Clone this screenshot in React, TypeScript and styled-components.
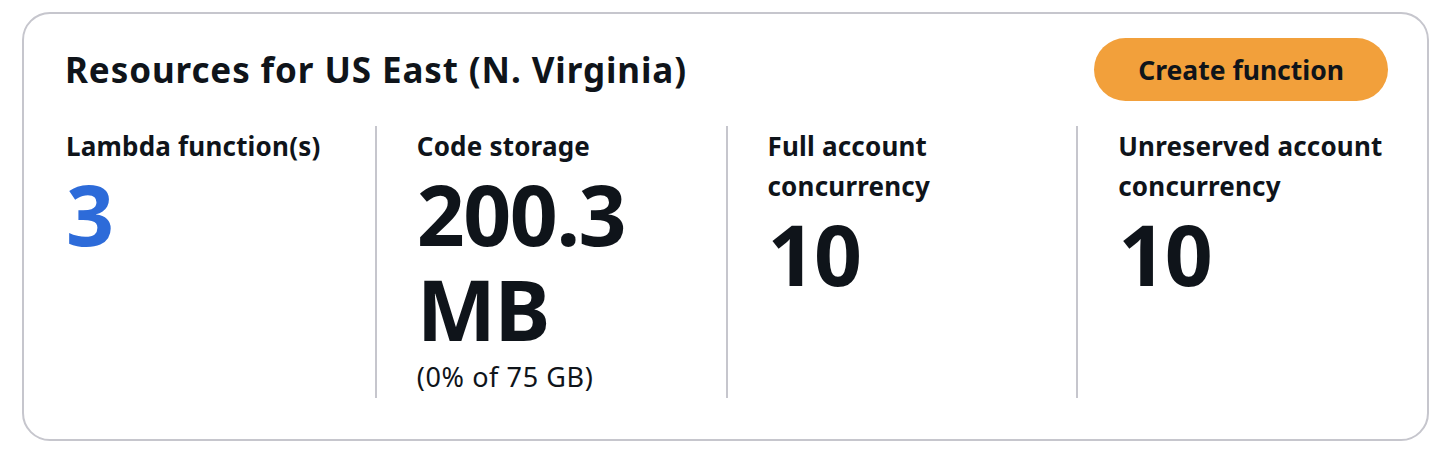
import { createGlobalStyle, styled } from 'styled-components';

const GlobalStyle = createGlobalStyle`
  body {
    margin: 0;
    background: #ffffff;
    font-family: "Noto Sans", "Open Sans", Arial, sans-serif;
    color: #0f141a;
  }
`;

const Page = styled.div`
  padding: 12px 27px 0 22px;
`;

// 리소스 카드
const Card = styled.section`
  border: 2px solid #c6c6cd;
  border-radius: 28px;
  padding: 24px 0 41px;
  background: #ffffff;
`;

const Header = styled.div`
  display: flex;
  align-items: center;
  justify-content: space-between;
  padding: 0 39px 0 41px;
`;

const Title = styled.h2`
  margin: 0;
  font-size: 35px;
  font-weight: 700;
  letter-spacing: 0.9px;
  color: #0f141a;
`;

const PrimaryButton = styled.button`
  height: 63px;
  padding: 0 44px;
  border: none;
  border-radius: 32px;
  background: #f2a03b;
  color: #0f141a;
  font-family: inherit;
  font-size: 26.5px;
  font-weight: 700;
  cursor: pointer;
`;

const Columns = styled.div`
  display: grid;
  grid-template-columns: repeat(4, 1fr);
  margin-top: 25px;
`;

const Column = styled.div<{ $divider?: boolean }>`
  padding: 0 16px 0 40px;
  border-left: 2px solid ${(p) => (p.$divider ? '#c6c6cd' : 'transparent')};
`;

const Label = styled.div`
  font-size: 26px;
  font-weight: 700;
  line-height: 40px;
  letter-spacing: 0.2px;
`;

const Value = styled.div<{ $link?: boolean }>`
  font-size: 84px;
  font-weight: 700;
  line-height: 95px;
  letter-spacing: -1.5px;
  color: ${(p) => (p.$link ? '#2d6bd9' : '#0f141a')};
`;

const Note = styled.div`
  font-size: 27px;
  line-height: 42px;
  letter-spacing: 0.6px;
`;

const stats = [
  { label: 'Lambda function(s)', value: '3', link: true },
  { label: 'Code storage', value: '200.3 MB', note: '(0% of 75 GB)' },
  { label: 'Full account concurrency', value: '10' },
  { label: 'Unreserved account concurrency', value: '10' },
];

const App = () => {
  return (
    <Page>
      <GlobalStyle />
      <Card>
        <Header>
          <Title>Resources for US East (N. Virginia)</Title>
          <PrimaryButton>Create function</PrimaryButton>
        </Header>
        <Columns>
          {stats.map((s, i) => (
            <Column key={s.label} $divider={i > 0}>
              <Label>{s.label}</Label>
              <Value $link={s.link}>{s.value}</Value>
              {s.note && <Note>{s.note}</Note>}
            </Column>
          ))}
        </Columns>
      </Card>
    </Page>
  );
};

export default App;
